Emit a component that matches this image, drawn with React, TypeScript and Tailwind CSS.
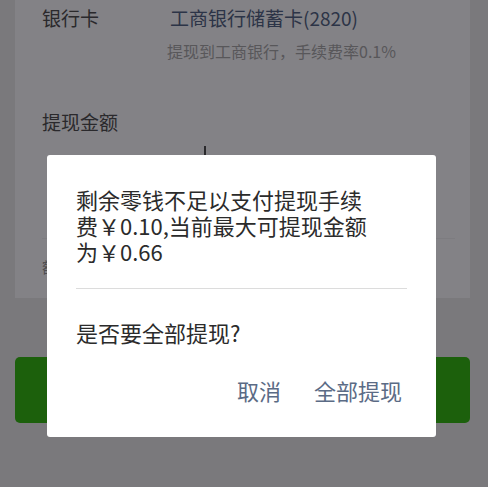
import React from 'react'

const font = { fontFamily: '"Noto Sans CJK SC", "Noto Sans", sans-serif' }

/* ── Dimmed withdraw page behind the dialog ── */
function WithdrawPage() {
  return (
    <div className="pl-[15px] pr-[18px]">
      <div className="h-[298px] bg-[#838286] pl-[27px] pr-[15px] pt-[5px]">
        <div className="flex text-[19px] leading-[26px] text-[#2a292c]">
          <span className="w-[128px]">银行卡</span>
          <span className="text-[#2c3447]">工商银行储蓄卡(2820)</span>
        </div>
        <div className="mt-[10px] ml-[125px] text-[16px] leading-[20px] text-[#58575a]">
          提现到工商银行，手续费率0.1%
        </div>
        <div className="mt-[48px] text-[19px] leading-[26px] text-[#2a292c]">提现金额</div>
        <div className="mt-[11px] ml-[162px] h-[30px] w-[2px] bg-[#2a292c]" />
        <div className="mt-[62px] h-px bg-[#7d7c80]" />
        <div className="mt-[18px] text-[15px] leading-[20px] text-[#4e4d50]">额</div>
      </div>
      <button className="mt-[59px] h-[66px] w-full rounded-[5px] bg-[#1c600c]" />
    </div>
  )
}

/* ── Confirm dialog ── */
function ConfirmDialog() {
  return (
    <div className="absolute left-[47px] top-[155px] flex h-[282px] w-[389px] flex-col rounded-[3px] bg-white px-[29px]">
      <p className="mt-[31px] w-[300px] text-[22px] leading-[26px] text-[#2b2b2b]">
        剩余零钱不足以支付提现手续费￥0.10,当前最大可提现金额为￥0.66
      </p>
      <div className="mt-[24px] h-px bg-[#dcdcdc]" />
      <p className="mt-[30px] text-[22px] leading-[26px] text-[#2b2b2b]">是否要全部提现?</p>
      <div className="mt-[32px] flex justify-end gap-[33px] pr-[5px] text-[22px] leading-[26px] text-[#5b6b85]">
        <span>取消</span>
        <span>全部提现</span>
      </div>
    </div>
  )
}

export default function App() {
  return (
    <div className="relative h-[487px] w-full overflow-hidden bg-[#7a797c]" style={font}>
      <WithdrawPage />
      <ConfirmDialog />
    </div>
  )
}
